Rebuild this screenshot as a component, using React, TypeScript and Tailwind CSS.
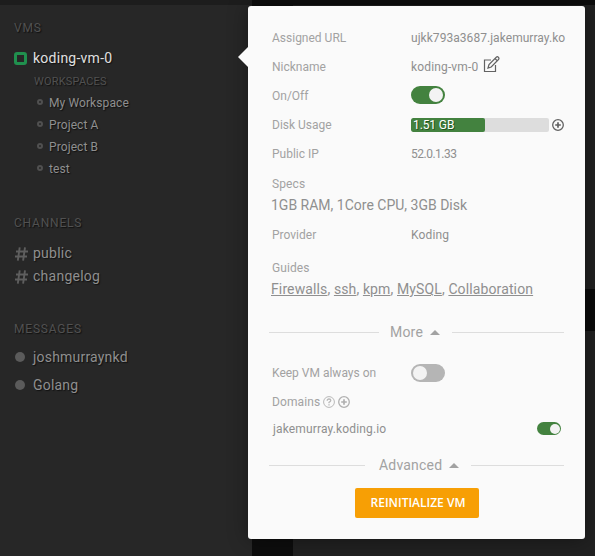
import React from "react";

function Heading({ children }: { children: React.ReactNode }) {
  return <h2 className="h-[18px] pl-[14px] text-[12px] leading-[18px] tracking-[0.8px] text-[#515151]">{children}</h2>;
}

function Channel({ name }: { name: string }) {
  return (
    <li className="flex h-[23px] items-center pl-[15px]">
      <svg width="13" height="14" viewBox="0 0 13 14" fill="none" stroke="#5e5e5e" strokeWidth="1.9">
        <path d="M4.7 0.3 2.8 13.7M10 0.3 8.1 13.7M1 4.5H13M0 9.5H12" />
      </svg>
      <span className="ml-[5px] text-[14px] tracking-[0.25px]">{name}</span>
    </li>
  );
}

function Message({ name }: { name: string }) {
  return (
    <li className="flex h-7 items-center pl-[15px]">
      <i className="size-[10px] rounded-full bg-[#5b5b5b]" />
      <span className="ml-2 text-[14px] tracking-[0.2px]">{name}</span>
    </li>
  );
}

function Sidebar() {
  return (
    <aside className="w-[252px] border-t-[5px] border-[#1d1d1d] bg-[#272727] text-[#8f8f8f] [text-shadow:1px_1px_1px_#111]">
      <div className="pt-[14px]">
        <Heading>VMS</Heading>
        <div className="mt-[9px] flex h-6 items-center pl-[14px]">
          <i className="size-[13px] rounded-[3px] border-[3px] border-[#20904e]" />
          <span className="ml-[6px] text-[14px] tracking-[0.25px] text-[#e0e0e0]">koding-vm-0</span>
        </div>
        <div className="mt-1 h-4 pl-[34px] text-[11px] leading-4 tracking-[0.2px] text-[#515151]">WORKSPACES</div>
        <ul className="mt-[2px]">
          {["My Workspace", "Project A", "Project B", "test"].map((name) => (
            <li key={name} className="flex h-[22px] items-center pl-[37px] text-[12px] tracking-[0.1px]">
              <i className="mb-[2px] size-[6px] rounded-full border-2 border-[#505050]" />
              <span className="ml-[6px]">{name}</span>
            </li>
          ))}
        </ul>
      </div>
      <div className="mt-[34px]">
        <Heading>CHANNELS</Heading>
        <ul className="mt-[10px]">
          <Channel name="public" />
          <Channel name="changelog" />
        </ul>
      </div>
      <div className="mt-[32px]">
        <Heading>MESSAGES</Heading>
        <ul className="mt-[5px]">
          <Message name="joshmurraynkd" />
          <Message name="Golang" />
        </ul>
      </div>
    </aside>
  );
}

function Row({ label, children }: { label: string; children: React.ReactNode }) {
  return (
    <div className="flex h-[29px] items-center">
      <span className="w-[139px] shrink-0 text-[12px] text-[#a2a2a2]">{label}</span>
      {children}
    </div>
  );
}

function PlusCircle({ className, size }: { className: string; size: number }) {
  return (
    <svg className={className} width={size} height={size} viewBox="0 0 12 12" fill="none" stroke="currentColor">
      <circle cx="6" cy="6" r="5.3" strokeWidth="1.3" />
      <path d="M6 3.2V8.8M3.2 6H8.8" strokeWidth="1.7" />
    </svg>
  );
}

function Divider({ label, left, gap }: { label: string; left: string; gap: string }) {
  return (
    <div className="-ml-[3px] flex h-5 items-center">
      <i className={`h-px bg-[#dddddd] ${left}`} />
      <span className={`text-[14px] tracking-[0.2px] text-[#a2a2a2] ${gap}`}>{label}</span>
      <svg className="ml-[7px]" width="10" height="5" viewBox="0 0 10 5" fill="#a2a2a2">
        <path d="M0 5 5 0 10 5Z" />
      </svg>
      <i className="ml-[12px] h-px flex-1 bg-[#dddddd]" />
    </div>
  );
}

function Details() {
  const guides = ["Firewalls", "ssh", "kpm", "MySQL", "Collaboration"];
  return (
    <section className="absolute left-[248px] top-[6px] h-[533px] w-[337px] rounded-[3px] bg-[#fafafa] pl-6 pr-[21px] pt-[17px] text-[#8f8f8f] shadow-[0_0_20px_rgba(0,0,0,0.4)]">
      <svg className="absolute -left-[10px] top-[41px]" width="10" height="20" viewBox="0 0 10 20" fill="#fafafa">
        <path d="M10 0 0 10 10 20Z" />
      </svg>
      <Row label="Assigned URL">
        <span className="whitespace-nowrap pt-px text-[12px] tracking-[0.05px]">ujkk793a3687.jakemurray.ko</span>
      </Row>
      <Row label="Nickname">
        <span className="pt-px text-[12px] tracking-[0.15px]">koding-vm-0</span>
        <svg className="mb-[5px] ml-[5px]" width="17" height="17" viewBox="0 0 17 17" fill="none" stroke="#626262" strokeWidth="1.2">
          <path d="M8 4H1.5V15.5H12.5V9M5 12 6 8.5 13.5 1Q14.5 .3 15.5 1.5T15.5 3.5L8.2 11ZM12 2.5 14.3 4.8" />
        </svg>
      </Row>
      <Row label="On/Off">
        <span className="mb-px flex h-[18px] w-[34px] items-center justify-end rounded-full bg-[#43823f] pr-[2px]">
          <i className="size-[14px] rounded-full bg-[#f3f3f3]" />
        </span>
      </Row>
      <Row label="Disk Usage">
        <span className="mt-px h-[14px] w-[138px] overflow-hidden rounded-[2px] bg-[#dddddd]">
          <span className="block h-full w-[74px] rounded-[2px] bg-[#43823f] pl-[2px] text-[12px] leading-[14px] tracking-[-0.1px] text-white [text-shadow:1px_1px_0_#24531f]">1.51 GB</span>
        </span>
        <PlusCircle className="ml-[3px] mt-px text-[#626262]" size={12} />
      </Row>
      <Row label="Public IP">
        <span className="pt-px text-[12px] tracking-[-0.5px]">52.0.1.33</span>
      </Row>
      <div className="mt-[6px] h-5 text-[12px] leading-5 tracking-[0.1px] text-[#a2a2a2]">Specs</div>
      <div className="-ml-px mt-px h-5 text-[14px] leading-5">1GB RAM, 1Core CPU, 3GB Disk</div>
      <div className="mt-[5px]">
        <Row label="Provider">
          <span className="pt-px text-[12px] tracking-[0.15px]">Koding</span>
        </Row>
      </div>
      <div className="mt-[9px] h-5 text-[12px] leading-5 tracking-[0.1px] text-[#a2a2a2]">Guides</div>
      <div className="-ml-px mt-px h-5 whitespace-nowrap text-[14px] leading-5 tracking-[0.12px]">
        {guides.map((guide, i) => (
          <React.Fragment key={guide}>
            <a className="underline underline-offset-1">{guide}</a>
            {i < guides.length - 1 && ", "}
          </React.Fragment>
        ))}
      </div>
      <div className="mt-[23px]">
        <Divider label="More" left="w-[110px]" gap="ml-[11px]" />
      </div>
      <div className="mt-[16px]">
        <Row label="Keep VM always on">
          <span className="flex h-[18px] w-[34px] items-center rounded-full bg-[#b5b5b5] pl-[2px]">
            <i className="size-[14px] rounded-full bg-[#f3f3f3]" />
          </span>
        </Row>
      </div>
      <div className="flex h-[30px] items-center text-[#a2a2a2]">
        <span className="w-12 text-[12px] tracking-[0.1px]">Domains</span>
        <svg className="ml-[3px]" width="12" height="12" viewBox="0 0 12 12" fill="none" stroke="#b8b8b8">
          <circle cx="6" cy="6" r="5.4" />
          <path d="M4.2 4.7Q4.2 3 6 3T7.8 4.6Q7.8 5.5 6 6.3V7.2M6 8.2V9.4" strokeWidth="1.3" />
        </svg>
        <PlusCircle className="ml-[3px] text-[#b0b0b0]" size={12} />
      </div>
      <div className="flex h-[23px] items-center justify-between pr-[3px]">
        <span className="pl-px text-[12px] tracking-[0.15px]">jakemurray.koding.io</span>
        <span className="flex h-[13px] w-6 items-center justify-end rounded-full bg-[#43823f] pr-[1px]">
          <i className="size-[10px] rounded-full bg-[#f3f3f3]" />
        </span>
      </div>
      <div className="mt-[15px]">
        <Divider label="Advanced" left="w-[96px]" gap="ml-[14px]" />
      </div>
      <button className="ml-[83px] mt-[13px] block h-[30px] w-[124px] rounded-[2px] bg-[#f79f05] pl-[2px] font-['Open_Sans',sans-serif] text-[12px] font-semibold text-white">REINITIALIZE VM</button>
    </section>
  );
}

export default function App() {
  return (
    <div className="relative flex h-[556px] w-[595px] overflow-hidden bg-[#272727] font-[Roboto,sans-serif]">
      <Sidebar />
      <main className="flex flex-1 flex-col bg-[#212121]">
        <div className="h-[5px] bg-[#0d0d0d]" />
        <div className="flex flex-1">
          <div className="w-[41px] bg-[#0d0d0d]" />
          <div className="flex flex-1 flex-col">
            <div className="mt-[284px] h-[42px] bg-[#0b0b0b]" />
          </div>
        </div>
      </main>
      <Details />
    </div>
  );
}
